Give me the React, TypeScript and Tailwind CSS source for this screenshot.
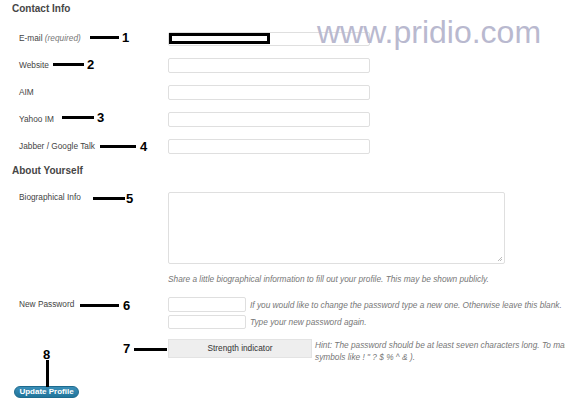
import React from "react";

const label = "text-[8.3px] leading-[10px] text-[#444]";
const desc = "text-[8.3px] leading-[10px] italic text-[#777] whitespace-nowrap";
const field = "h-[15px] border border-[#dfdfdf] rounded-[2px] bg-white";

function Row({ name, children }: { name: React.ReactNode; children?: React.ReactNode }) {
  return (
    <div className="grid grid-cols-[149px_202px] items-center pl-[19px] h-[15px]">
      <span className={`${label} -mt-[1px]`}>{name}</span>
      {children ?? <div className={field} />}
    </div>
  );
}

function Arrow({ n, x1, x2, y, nx }: { n: string; x1: number; x2: number; y: number; nx: number }) {
  return (
    <>
      <div className="absolute h-[3px] bg-black" style={{ left: x1, width: x2 - x1, top: y - 1 }} />
      <span
        className="absolute text-[13px] leading-[13px] font-bold text-black"
        style={{ left: nx, top: y - 6 }}
      >
        {n}
      </span>
    </>
  );
}

export default function App() {
  return (
    <div className="relative w-[565px] h-[403px] overflow-hidden bg-white font-['Liberation_Sans',Arial,sans-serif] text-[#333]">
      <h3 className="pl-[12px] pt-[3px] text-[10px] leading-[12px] font-bold text-[#464646]">Contact Info</h3>

      <div className="mt-[16px] flex flex-col gap-[12px]">
        <Row
          name={
            <>
              E-mail <i className="text-[#777]">(required)</i>
            </>
          }
        >
          <div className="h-[14px] border border-[#dfdfdf] rounded-[2px] bg-white">
            <div className="w-[101px] h-[11px] border-[3px] border-black bg-white" />
          </div>
        </Row>
        <Row name="Website" />
        <Row name="AIM" />
        <Row name="Yahoo IM" />
        <Row name="Jabber / Google Talk" />
      </div>

      <h3 className="mt-[11px] pl-[12px] text-[10px] leading-[12px] font-bold text-[#464646]">About Yourself</h3>

      <div className="mt-[15px] grid grid-cols-[149px_auto] pl-[19px]">
        <span className={label}>Biographical Info</span>
        <div>
          <div className="relative w-[337px] h-[72px] border border-[#dfdfdf] rounded-[2px] bg-white">
            <svg className="absolute right-[1px] bottom-[1px]" width="6" height="6" viewBox="0 0 6 6">
              <path d="M1 5L5 1M3 5L5 3" stroke="#aaa" strokeWidth="0.8" />
            </svg>
          </div>
          <p className={`${desc} mt-[10px]`}>
            Share a little biographical information to fill out your profile. This may be shown publicly.
          </p>
        </div>
      </div>

      <div className="mt-[13px] grid grid-cols-[149px_auto] pl-[19px]">
        <span className={`${label} mt-[2px]`}>New Password</span>
        <div className="flex flex-col">
          <div className="flex items-center gap-[4px]">
            <div className={`${field} w-[78px]`} />
            <span className={desc}>If you would like to change the password type a new one. Otherwise leave this blank.</span>
          </div>
          <div className="mt-[3px] flex items-center gap-[4px]">
            <div className="w-[78px] h-[14px] border border-[#dfdfdf] rounded-[2px] bg-white" />
            <span className={desc}>Type your new password again.</span>
          </div>
          <div className="mt-[10px] flex items-start gap-[3px]">
            <div className="w-[144px] h-[19px] shrink-0 flex items-center justify-center bg-[#eee] border border-[#e3e3e3] text-[8.3px] text-[#333]">
              Strength indicator
            </div>
            <p className={`${desc} leading-[12px]`}>
              Hint: The password should be at least seven characters long. To make it stronger, use upper and lower case letters, numbers and
              <br />
              symbols like ! " ? $ % ^ &amp; ).
            </p>
          </div>
        </div>
      </div>

      <div className="mt-[23px] pl-[14px] flex">
        <button className="w-[65px] h-[12px] rounded-full border border-[#1e6a8d] bg-gradient-to-b from-[#3a8fb8] to-[#21759b] text-white text-[8px] leading-[10px] font-bold">
          Update Profile
        </button>
      </div>

      <span className="absolute left-[317px] top-[14px] text-[32px] leading-[36px] text-[#b9b9cf]">
        www.pridio.com
      </span>

      <Arrow n="1" x1={90} x2={119} y={37} nx={122} />
      <Arrow n="2" x1={53} x2={84} y={64} nx={87} />
      <Arrow n="3" x1={62} x2={94} y={117} nx={97} />
      <Arrow n="4" x1={100} x2={136} y={146} nx={140} />
      <Arrow n="5" x1={93} x2={125} y={198} nx={126} />
      <Arrow n="6" x1={80} x2={119} y={305} nx={123} />
      <span className="absolute left-[123px] top-[342px] text-[13px] leading-[13px] font-bold text-black">7</span>
      <div className="absolute left-[134px] top-[348px] w-[33px] h-[3px] bg-black" />
      <span className="absolute left-[43px] top-[348px] text-[13px] leading-[13px] font-bold text-black">8</span>
      <div className="absolute left-[46px] top-[360px] w-[3px] h-[27px] bg-black" />
    </div>
  );
}
